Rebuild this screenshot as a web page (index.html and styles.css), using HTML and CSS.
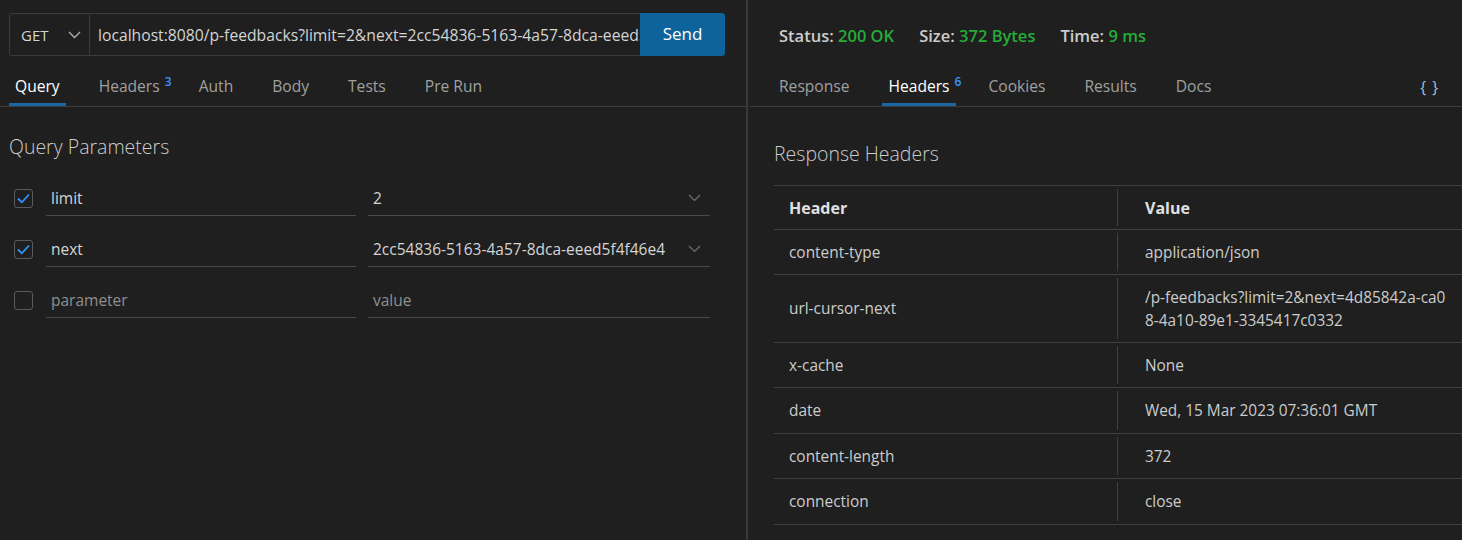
FILE: index.html
```html
<!DOCTYPE html>
<html lang="en">
<head>
<meta charset="utf-8">
<title>Request</title>
<link rel="stylesheet" href="styles.css">
</head>
<body>
<div class="app">
  <section class="pane pane-left">
    <div class="url-bar">
      <div class="method">
        <span>GET</span>
        <svg class="chev" width="13" height="8" viewBox="0 0 13 8"><path d="M1 1 L6.5 6.5 L12 1" fill="none" stroke="#b0b0b0" stroke-width="1.3"/></svg>
      </div>
      <div class="url"><span class="url-text">localhost:8080/p-feedbacks?limit=2&amp;next=2cc54836-5163-4a57-8dca-eeed5f4f46e4</span></div>
      <button class="send">Send</button>
    </div>
    <nav class="tabs">
      <span class="tab active">Query</span>
      <span class="tab">Headers<sup class="badge">3</sup></span>
      <span class="tab">Auth</span>
      <span class="tab">Body</span>
      <span class="tab">Tests</span>
      <span class="tab">Pre Run</span>
    </nav>
    <div class="params">
      <h2 class="section-title">Query Parameters</h2>
      <div class="param-row">
        <span class="check on"><svg width="17" height="17" viewBox="0 0 17 17"><path d="M3 8.5 L6.8 12.3 L14 4.5" fill="none" stroke="#3794ff" stroke-width="1.8"/></svg></span>
        <div class="field key">limit</div>
        <div class="field val">2<svg class="chev-dim" width="13" height="8" viewBox="0 0 13 8"><path d="M1 1 L6.5 6.5 L12 1" fill="none" stroke="#6e6e6e" stroke-width="1.2"/></svg></div>
      </div>
      <div class="param-row">
        <span class="check on"><svg width="17" height="17" viewBox="0 0 17 17"><path d="M3 8.5 L6.8 12.3 L14 4.5" fill="none" stroke="#3794ff" stroke-width="1.8"/></svg></span>
        <div class="field key">next</div>
        <div class="field val">2cc54836-5163-4a57-8dca-eeed5f4f46e4<svg class="chev-dim" width="13" height="8" viewBox="0 0 13 8"><path d="M1 1 L6.5 6.5 L12 1" fill="none" stroke="#6e6e6e" stroke-width="1.2"/></svg></div>
      </div>
      <div class="param-row">
        <span class="check"></span>
        <div class="field key placeholder">parameter</div>
        <div class="field val placeholder">value</div>
      </div>
    </div>
  </section>
  <section class="pane pane-right">
    <div class="status-bar">
      <span class="stat"><b>Status:</b> <em>200 OK</em></span>
      <span class="stat"><b>Size:</b> <em>372 Bytes</em></span>
      <span class="stat"><b>Time:</b> <em>9 ms</em></span>
    </div>
    <nav class="tabs tabs-right">
      <span class="tab">Response</span>
      <span class="tab active">Headers<sup class="badge">6</sup></span>
      <span class="tab">Cookies</span>
      <span class="tab">Results</span>
      <span class="tab">Docs</span>
      <span class="braces">{ }</span>
    </nav>
    <div class="resp">
      <h2 class="section-title">Response Headers</h2>
      <table class="hdr-table">
        <thead>
          <tr><th>Header</th><th class="vcol">Value</th></tr>
        </thead>
        <tbody>
          <tr><td>content-type</td><td class="vcol">application/json</td></tr>
          <tr class="tall"><td>url-cursor-next</td><td class="vcol">/p-feedbacks?limit=2&amp;next=4d85842a-ca0<br>8-4a10-89e1-3345417c0332</td></tr>
          <tr><td>x-cache</td><td class="vcol">None</td></tr>
          <tr class="h46"><td>date</td><td class="vcol">Wed, 15 Mar 2023 07:36:01 GMT</td></tr>
          <tr><td>content-length</td><td class="vcol">372</td></tr>
          <tr class="h46"><td>connection</td><td class="vcol">close</td></tr>
        </tbody>
      </table>
    </div>
  </section>
</div>
</body>
</html>
```

FILE: styles.css
```css
* { box-sizing: border-box; }
html, body {
  margin: 0;
  padding: 0;
  background: #1f1f1f;
  color: #cccccc;
  font-family: "Open Sans", "Noto Sans", sans-serif;
}
.app {
  display: flex;
  width: 1462px;
  height: 540px;
  overflow: hidden;
}
.pane-left {
  width: 748px;
  flex: none;
  border-right: 2px solid #3a3a3a;
}
.pane-right {
  flex: 1;
  min-width: 0;
}

/* URL bar */
.url-bar {
  display: flex;
  height: 43px;
  margin: 13px 0 0 9px;
  width: 716px;
}
.method {
  width: 81px;
  display: flex;
  align-items: center;
  justify-content: space-between;
  padding: 0 8px 0 11px;
  border: 1px solid #3c3c3c;
  border-radius: 3px 0 0 3px;
  font-size: 15px;
  color: #d4d4d4;
}
.url {
  flex: 1;
  min-width: 0;
  display: flex;
  align-items: center;
  padding-left: 8px;
  border-top: 1px solid #3c3c3c;
  border-bottom: 1px solid #3c3c3c;
  font-size: 15.7px;
  color: #d4d4d4;
  white-space: nowrap;
  overflow: hidden;
}
.url-text {
  overflow: hidden;
  text-overflow: clip;
  min-width: 0;
}
.send {
  width: 85px;
  flex: none;
  border: 0;
  border-radius: 0 3px 3px 0;
  background: #0e639c;
  color: #ffffff;
  font-family: inherit;
  font-size: 17px;
  padding: 0 0 2px;
}

/* Tabs */
.tabs {
  display: flex;
  height: 51px;
  border-bottom: 1px solid #3c3c3c;
  padding-left: 9px;
}
.tabs-right {
  padding-left: 24px;
  margin-left: 1px;
}
.tab {
  position: relative;
  padding: 18px 6px 5px;
  margin-right: 27px;
  line-height: 24px;
  font-size: 15.6px;
  color: #a0a0a0;
  border-bottom: 3px solid transparent;
}
.tab.active {
  color: #ffffff;
  border-bottom-color: #1a67a3;
}
.badge {
  position: absolute;
  left: calc(100% - 1px);
  top: 19px;
  font-size: 12px;
  line-height: 14px;
  color: #3794ff;
  font-weight: 600;
}
.braces {
  margin-left: auto;
  margin-right: 23px;
  padding-top: 19px;
  font-size: 15.5px;
  letter-spacing: 1px;
  color: #a9c0d6;
  line-height: 24px;
}

/* Query params */
.params {
  padding-left: 9px;
}
.section-title {
  margin: 26px 0 0;
  font-size: 19.5px;
  font-weight: 300;
  line-height: 28px;
  color: #cccccc;
}
.params .section-title { margin-bottom: 19px; }
.param-row {
  display: flex;
  align-items: center;
  height: 36px;
  margin-bottom: 15px;
}
.check {
  width: 19px;
  height: 19px;
  margin-left: 5px;
  margin-right: 13px;
  border: 1px solid #5b5b5b;
  border-radius: 3px;
  display: flex;
  align-items: center;
  justify-content: center;
}
.field {
  height: 36px;
  display: flex;
  align-items: center;
  padding-left: 5px;
  border-bottom: 1px solid #4a4a4a;
  font-size: 15.5px;
  color: #d4d4d4;
}
.field.key { width: 310px; }
.field.val {
  width: 342px;
  margin-left: 12px;
  justify-content: space-between;
  padding-right: 9px;
}
.field.placeholder { color: #8f8f8f; }

/* Right side */
.status-bar {
  display: flex;
  align-items: center;
  height: 43px;
  margin-top: 14px;
  margin-bottom: -1px;
  padding-left: 31px;
  font-size: 16.5px;
}
.stat {
  margin-right: 25px;
  font-weight: 600;
  color: #cccccc;
}
.stat b { font-weight: 600; }
.stat em {
  font-style: normal;
  color: #24ad37;
}
.resp {
  padding-left: 26px;
}
.resp .section-title {
  margin-top: 33px;
  margin-bottom: 17px;
}
.hdr-table {
  width: 688px;
  border-collapse: collapse;
  font-size: 15.4px;
}
.hdr-table tr {
  border-top: 1px solid #404040;
  border-bottom: 1px solid #404040;
}
.hdr-table th {
  text-align: left;
  font-weight: 700;
  color: #e0e0e0;
  height: 44px;
  padding: 0 15px;
  font-size: 16px;
}
.hdr-table td {
  height: 45px;
  padding: 0 15px;
  line-height: 23px;
  color: #cccccc;
  vertical-align: middle;
}
.hdr-table tr.tall td { height: 68px; }
.hdr-table tr.h46 td { height: 46px; }
.hdr-table th:first-child, .hdr-table td:first-child { width: 343px; }
.hdr-table .vcol {
  position: relative;
  padding-left: 28px;
}
.hdr-table .vcol::before {
  content: "";
  position: absolute;
  left: 0;
  top: 3px;
  bottom: 3px;
  width: 1px;
  background: #404040;
}
```
